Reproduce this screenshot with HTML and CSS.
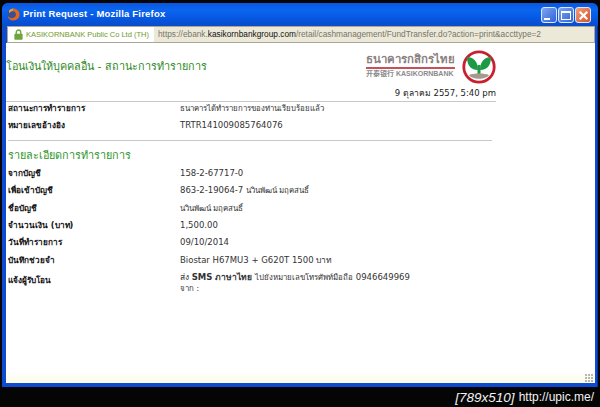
FILE: index.html
```html
<!DOCTYPE html>
<html lang="th">
<head>
    <meta charset="UTF-8">
    <title>Print Request - Mozilla Firefox</title>
    <link rel="stylesheet" href="styles.css">
</head>
<body>
    <div class="window">
        <div class="titlebar">
            <svg class="ff-icon" width="13" height="13" viewBox="0 0 16 16">
                <circle cx="8" cy="8" r="7.5" fill="#3a4f96"/>
                <path d="M8 .5a7.5 7.5 0 0 1 7.5 7.5A7.5 7.5 0 0 1 8 15.500 7.500 7.500 0 0 1 .8 9.500c1.200 2 3.200 3 5.200 3 3 0 5-2 5-4.500s-2-4-4-4c1-1 1-2 1-3.500z" fill="#e2671d"/>
                <path d="M2.500 3c2-2 4-2.500 6-2.500-1 1-1 2.500-2 3.500-2 0-3 1-3 2.500-1-1-1.200-2.500-1-3.500z" fill="#f2a534"/>
            </svg>
            <span class="title-text">Print Request - Mozilla Firefox</span>
            <div class="win-buttons">
                <span class="win-btn"><i class="min-glyph"></i></span>
                <span class="win-btn"><i class="max-glyph"></i></span>
                <span class="win-btn close">
                    <svg width="11" height="11" viewBox="0 0 13 13"><path d="M2 2l9 9M11 2l-9 9" stroke="#fff" stroke-width="2.6"/></svg>
                </span>
            </div>
        </div>

        <div class="addressbar">
            <div class="identity">
                <svg class="lock" width="9" height="11" viewBox="0 0 12 14">
                    <path d="M3 7V4a3 3 0 0 1 6 0v3" fill="none" stroke="#6fa53a" stroke-width="1.8"/>
                    <rect x="0.500" y="6" width="11" height="8" rx="1" fill="#6fa53a"/>
                </svg>
                <span>KASIKORNBANK Public Co Ltd (TH)</span>
            </div>
            <div class="url">https://ebank.<b>kasikornbankgroup.com</b>/retail/cashmanagement/FundTransfer.do?action=print&amp;accttype=2</div>
        </div>

        <div class="content">
            <div class="page">
                <div class="page-head">
                    <h1>โอนเงินให้บุคคลอื่น - สถานะการทำรายการ</h1>
                    <div class="brand">
                        <div class="brand-text">
                            <div class="brand-th">ธนาคารกสิกรไทย</div>
                            <div class="brand-en">开泰银行 KASIKORNBANK</div>
                        </div>
                        <svg width="34" height="34" viewBox="0 0 34 34">
                            <circle cx="17" cy="17" r="15.200" fill="#fff" stroke="#c8202f" stroke-width="2.800"/>
                            <path d="M16 20C7 20 5 13 5 7c6 0 11 4 11 13z" fill="#1d9a45"/>
                            <path d="M18 20c9 0 11-7 11-13-6 0-11 4-11 13z" fill="#1d9a45"/>
                            <rect x="15.500" y="15" width="3" height="9" fill="#1d9a45"/>
                            <path d="M7 25c4-2 16-2 20 0-3 5-17 5-20 0z" fill="#a59a8c"/>
                        </svg>
                    </div>
                </div>
                <div class="date">9 ตุลาคม 2557, 5:40 pm</div>

                <div class="row"><div class="label">สถานะการทำรายการ</div><div class="value th">ธนาคารได้ทำรายการของท่านเรียบร้อยแล้ว</div></div>
                <div class="row"><div class="label">หมายเลขอ้างอิง</div><div class="value">TRTR141009085764076</div></div>

                <h2>รายละเอียดการทำรายการ</h2>

                <div class="row"><div class="label">จากบัญชี</div><div class="value">158-2-67717-0</div></div>
                <div class="row"><div class="label">เพื่อเข้าบัญชี</div><div class="value">863-2-19064-7 <span class="th">นวินพัฒน์ มฤคสนธิ์</span></div></div>
                <div class="row"><div class="label">ชื่อบัญชี</div><div class="value th">นวินพัฒน์ มฤคสนธิ์</div></div>
                <div class="row"><div class="label">จำนวนเงิน (บาท)</div><div class="value">1,500.00</div></div>
                <div class="row"><div class="label">วันที่ทำรายการ</div><div class="value">09/10/2014</div></div>
                <div class="row"><div class="label">บันทึกช่วยจำ</div><div class="value">Biostar H67MU3 + G620T 1500 บาท</div></div>
                <div class="row notify">
                    <div class="label">แจ้งผู้รับโอน</div>
                    <div class="value">ส่ง <b>SMS ภาษาไทย</b> <span class="th">ไปยังหมายเลขโทรศัพท์มือถือ</span> 0946649969<br><span class="th">จาก :</span></div>
                </div>
            </div>
            <div class="statusbar"><i class="grip"></i></div>
        </div>
    </div>
    <div class="stamp"><span class="size">[789x510]</span><span>http://upic.me/</span></div>
</body>
</html>
```

FILE: styles.css
```css
html, body {
    margin: 0;
    padding: 0;
}

body {
    width: 600px;
    height: 407px;
    overflow: hidden;
    background: #050505;
    font-family: "DejaVu Sans", "Noto Sans", sans-serif;
    color: #222;
}

.window {
    margin: 3px 2px 0 2px;
    height: 384px;
    display: flex;
    flex-direction: column;
    background: #0f4bd0;
    border-radius: 6px 6px 0 0;
    box-sizing: border-box;
    padding: 0 2px 4px 4px;
    border-right: 1px solid #0a2fa0;
}

.titlebar {
    height: 23px;
    flex: none;
    display: flex;
    align-items: center;
    margin: 0 -3px 0 -4px;
    padding: 0 7px 0 5px;
    border-radius: 6px 6px 0 0;
    background: linear-gradient(#0a55dc, #0a66f0 30%, #0656e0 70%, #0a4cc8);
}

.ff-icon {
    flex: none;
}

.title-text {
    margin-left: 3px;
    margin-bottom: 2px;
    font-family: "Liberation Sans", Arial, sans-serif;
    font-size: 9.500px;
    font-weight: bold;
    color: #fff;
    letter-spacing: 0.2px;
}

.win-buttons {
    margin-left: auto;
    margin-top: 1px;
    display: flex;
    gap: 1px;
}

.win-btn {
    width: 14px;
    height: 14px;
    display: flex;
    align-items: center;
    justify-content: center;
    background: linear-gradient(135deg, #7fa6f0, #2f62d8);
    border: 1px solid #dfe8fb;
    border-radius: 3px;
}

.win-btn.close {
    background: linear-gradient(135deg, #f0a080, #d8501f);
}

.min-glyph {
    width: 6px;
    height: 2px;
    background: #fff;
    margin-top: 7px;
    margin-right: 4px;
}

.max-glyph {
    width: 8px;
    height: 6px;
    border: 1px solid #fff;
    border-top-width: 2px;
}

.addressbar {
    height: 17px;
    flex: none;
    display: flex;
    background: #ece9d8;
    border: 1px solid #a9a796;
    box-sizing: border-box;
    margin: 0 0 0 1px;
    line-height: 15px;
    white-space: nowrap;
    overflow: hidden;
}

.identity {
    width: 146px;
    flex: none;
    display: flex;
    align-items: center;
    gap: 3px;
    padding-left: 6px;
    box-sizing: border-box;
    background: #fff;
    color: #6f9a2c;
    font-family: "Liberation Sans", Arial, sans-serif;
    font-size: 7.500px;
}

.lock {
    flex: none;
}

.url {
    padding-left: 4px;
    color: #77756a;
    font-family: "Liberation Sans", Arial, sans-serif;
    font-size: 8.300px;
}

.url b {
    font-weight: normal;
    color: #111;
}

.content {
    flex: 1;
    display: flex;
    flex-direction: column;
    background: #fff;
}

.page {
    flex: 1;
    width: 490px;
}

.page-head {
    height: 43px;
    display: flex;
    align-items: center;
    justify-content: space-between;
}

h1 {
    margin: 3px 0 0 0;
    font-size: 10.800px;
    font-weight: normal;
    color: #2d8a25;
}

.brand {
    display: flex;
    align-items: center;
    gap: 7px;
    margin-top: 4px;
}

.brand-text {
    margin-top: -3px;
}

.brand-th {
    font-size: 11.400px;
    font-weight: bold;
    line-height: 14px;
    color: #8a8080;
    padding-bottom: 1px;
    border-bottom: 2px solid #c8505a;
}

.brand-en {
    font-family: "Liberation Sans", "Noto Sans CJK SC", Arial, sans-serif;
    font-size: 7px;
    font-weight: bold;
    line-height: 10px;
    color: #8a8a8a;
}

.date {
    height: 16px;
    line-height: 15px;
    text-align: right;
    font-size: 8.500px;
    box-sizing: content-box;
    background: linear-gradient(#c8c8c8, #c8c8c8) 0 15px / 100% 1px no-repeat;
}

.row {
    display: flex;
    height: 17.400px;
    align-items: flex-start;
    font-size: 8.500px;
    line-height: 13px;
    padding-left: 2px;
}

.label {
    width: 172px;
    flex: none;
    font-size: 8.200px;
    font-weight: bold;
    color: #111;
}

.value {
    color: #333;
}

.th {
    font-size: 7.800px;
}

h2 {
    margin: 3px 0 0 2px;
    padding-top: 6px;
    height: 20px;
    border-top: 1px solid #c8c8c8;
    font-size: 10.800px;
    font-weight: normal;
    color: #2e962a;
    line-height: 18px;
    width: 484px;
}

.notify {
    height: 24px;
    align-items: center;
    line-height: 11px;
}

.notify .label {
    align-self: flex-start;
    margin-top: 3px;
    line-height: 13px;
}

.statusbar {
    height: 12px;
    flex: none;
    position: relative;
    background: linear-gradient(#fff, #fdfbe9);
}

.grip {
    position: absolute;
    right: 1px;
    bottom: 0;
    width: 9px;
    height: 9px;
    background: radial-gradient(circle at 1px 1px, #b8b8ac 1px, transparent 1.500px) 0 0 / 3px 3px;
}

.stamp {
    margin-top: 2px;
    display: flex;
    justify-content: flex-end;
    gap: 4px;
    padding-right: 6px;
    font-family: "Liberation Sans", Arial, sans-serif;
    font-size: 12px;
    line-height: 17px;
    color: #f2f2f2;
}

.size {
    font-style: italic;
    font-size: 13.500px;
}
```
